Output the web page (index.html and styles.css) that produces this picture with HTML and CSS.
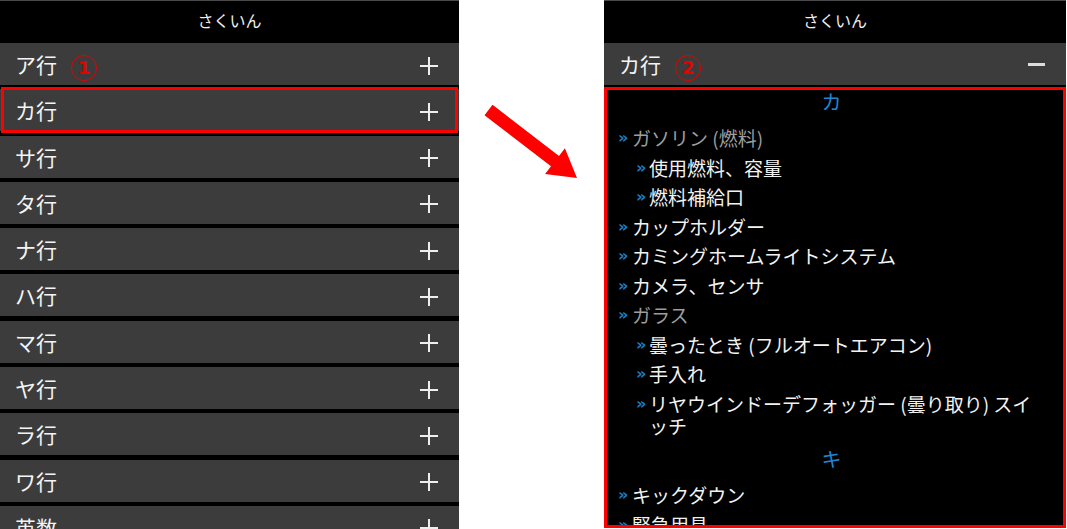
FILE: index.html
```html
<!DOCTYPE html>
<html lang="ja">
<head>
<meta charset="utf-8">
<title>さくいん</title>
<link rel="stylesheet" href="styles.css">
</head>
<body>
  <div class="panel panel-left">
    <div class="header">さくいん</div>
    <div class="row"><span class="row-label">ア行</span><span class="badge">1</span><svg class="plus" viewBox="0 0 18 18" width="18" height="18"><path d="M0 9H18M9 0V18"/></svg></div>
    <div class="row marked"><span class="row-label">カ行</span><svg class="plus" viewBox="0 0 18 18" width="18" height="18"><path d="M0 9H18M9 0V18"/></svg></div>
    <div class="row"><span class="row-label">サ行</span><svg class="plus" viewBox="0 0 18 18" width="18" height="18"><path d="M0 9H18M9 0V18"/></svg></div>
    <div class="row"><span class="row-label">タ行</span><svg class="plus" viewBox="0 0 18 18" width="18" height="18"><path d="M0 9H18M9 0V18"/></svg></div>
    <div class="row"><span class="row-label">ナ行</span><svg class="plus" viewBox="0 0 18 18" width="18" height="18"><path d="M0 9H18M9 0V18"/></svg></div>
    <div class="row"><span class="row-label">ハ行</span><svg class="plus" viewBox="0 0 18 18" width="18" height="18"><path d="M0 9H18M9 0V18"/></svg></div>
    <div class="row"><span class="row-label">マ行</span><svg class="plus" viewBox="0 0 18 18" width="18" height="18"><path d="M0 9H18M9 0V18"/></svg></div>
    <div class="row"><span class="row-label">ヤ行</span><svg class="plus" viewBox="0 0 18 18" width="18" height="18"><path d="M0 9H18M9 0V18"/></svg></div>
    <div class="row"><span class="row-label">ラ行</span><svg class="plus" viewBox="0 0 18 18" width="18" height="18"><path d="M0 9H18M9 0V18"/></svg></div>
    <div class="row"><span class="row-label">ワ行</span><svg class="plus" viewBox="0 0 18 18" width="18" height="18"><path d="M0 9H18M9 0V18"/></svg></div>
    <div class="row"><span class="row-label">英数</span><svg class="plus" viewBox="0 0 18 18" width="18" height="18"><path d="M0 9H18M9 0V18"/></svg></div>
  </div>

  <div class="arrow-col">
    <svg class="arrow" viewBox="459 0 145 200" width="145" height="200">
      <polygon points="492.5,104.8 559,156 564.9,148.2 577,178 545.1,174 551,166.3 484.5,115.2"/>
    </svg>
  </div>

  <div class="panel panel-right">
    <div class="header">さくいん</div>
    <div class="row"><span class="row-label">カ行</span><span class="badge">2</span><span class="minus"></span></div>
    <div class="content">
      <div class="section-title">カ</div>
      <ul class="items">
        <li class="item muted"><span class="bullet">»</span><span class="text">ガソリン (燃料)</span></li>
        <li class="item sub"><span class="bullet">»</span><span class="text">使用燃料、容量</span></li>
        <li class="item sub"><span class="bullet">»</span><span class="text">燃料補給口</span></li>
        <li class="item"><span class="bullet">»</span><span class="text">カップホルダー</span></li>
        <li class="item"><span class="bullet">»</span><span class="text">カミングホームライトシステム</span></li>
        <li class="item"><span class="bullet">»</span><span class="text">カメラ、センサ</span></li>
        <li class="item muted"><span class="bullet">»</span><span class="text">ガラス</span></li>
        <li class="item sub"><span class="bullet">»</span><span class="text">曇ったとき (フルオートエアコン)</span></li>
        <li class="item sub"><span class="bullet">»</span><span class="text">手入れ</span></li>
        <li class="item sub"><span class="bullet">»</span><span class="text">リヤウインドーデフォッガー (曇り取り) スイッチ</span></li>
      </ul>
      <div class="section-title next">キ</div>
      <ul class="items">
        <li class="item"><span class="bullet">»</span><span class="text">キックダウン</span></li>
        <li class="item"><span class="bullet">»</span><span class="text">緊急用具</span></li>
      </ul>
    </div>
  </div>
</body>
</html>
```

FILE: styles.css
```css
html, body {
  margin: 0;
  padding: 0;
}

body {
  background: #ffffff;
  font-family: "Noto Sans CJK JP", "Noto Sans", sans-serif;
  display: flex;
  align-items: flex-start;
  height: 529px;
  overflow: hidden;
}

.panel {
  flex: none;
  background: #000000;
  overflow: hidden;
}

.panel-left {
  width: 459px;
  height: 529px;
}

.panel-right {
  width: 462px;
  height: 528px;
}

.arrow-col {
  flex: none;
  width: 145px;
}

.arrow {
  display: block;
}

.arrow polygon {
  fill: #ff0000;
}

.header {
  height: 38px;
  padding-bottom: 4px;
  border-top: 1px solid #4a4a4a;
  display: flex;
  align-items: center;
  justify-content: center;
  color: #f0f0f0;
  font-size: 16px;
  line-height: 20px;
}

.row {
  height: 42px;
  background: #3c3c3c;
  display: flex;
  align-items: center;
  padding: 0 21px 0 15px;
  color: #f4f4f4;
  font-size: 21px;
  line-height: 26px;
}

.row + .row {
  margin-top: 4.3px;
}

.row.marked {
  position: relative;
}

.row.marked::after {
  content: "";
  position: absolute;
  top: -2px;
  bottom: -2px;
  left: 1px;
  right: 1px;
  border: 3px solid #ff0000;
  pointer-events: none;
}

.badge {
  width: 26px;
  height: 26px;
  box-sizing: border-box;
  margin-left: 14px;
  margin-top: 7px;
  border: 1.5px solid #e60000;
  border-radius: 50%;
  color: #e60000;
  font-family: "DejaVu Sans", sans-serif;
  font-weight: bold;
  font-size: 18px;
  line-height: 23px;
  text-align: center;
}

.plus {
  margin-left: auto;
  margin-top: 3px;
  display: block;
}

.plus path {
  stroke: #eeeeee;
  stroke-width: 2;
  fill: none;
}

.minus {
  margin-left: auto;
  margin-top: 1px;
  width: 17px;
  height: 3px;
  background: #dddddd;
}

.content {
  margin-top: 2px;
  height: 441px;
  box-sizing: border-box;
  border: 3px solid #ff0000;
  padding: 0 18px 0 11px;
  overflow: hidden;
}

.section-title {
  text-align: center;
  color: #1b88d6;
  font-size: 20px;
  line-height: 24px;
  padding-bottom: 13px;
}

.section-title.next {
  padding-top: 3px;
}

.items {
  list-style: none;
  margin: 0;
  padding: 0;
}

.item {
  display: flex;
  align-items: flex-start;
  color: #f2f2f2;
  font-size: 19px;
  line-height: 22px;
  margin-bottom: 7.5px;
}

.item.muted {
  color: #9d9d9d;
}

.item.sub {
  padding-left: 18px;
}

.bullet {
  flex: none;
  width: 14px;
  color: #1a7ec6;
  font-family: "DejaVu Sans", sans-serif;
  font-weight: bold;
  font-size: 16px;
  line-height: 22px;
}

.item.sub .bullet {
  width: 13px;
}

.text {
  flex: 1;
  min-width: 0;
}
```
